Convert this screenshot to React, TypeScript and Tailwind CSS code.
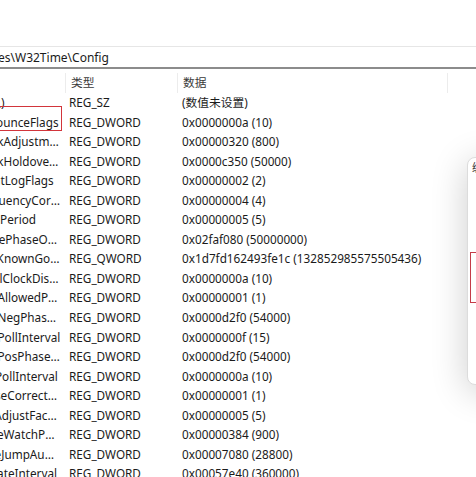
const rows: [string, string, string][] = [
  ["(默认)", "REG_SZ", "(数值未设置)"],
  ["AnnounceFlags", "REG_DWORD", "0x0000000a (10)"],
  ["ClockAdjustmentAuditLimit", "REG_DWORD", "0x00000320 (800)"],
  ["ClockHoldoverPeriod", "REG_DWORD", "0x0000c350 (50000)"],
  ["EventLogFlags", "REG_DWORD", "0x00000002 (2)"],
  ["FrequencyCorrectRate", "REG_DWORD", "0x00000004 (4)"],
  ["HoldPeriod", "REG_DWORD", "0x00000005 (5)"],
  ["LargePhaseOffset", "REG_DWORD", "0x02faf080 (50000000)"],
  ["LastKnownGoodTime", "REG_QWORD", "0x1d7fd162493fe1c (132852985575505436)"],
  ["LocalClockDispersion", "REG_DWORD", "0x0000000a (10)"],
  ["MaxAllowedPhaseOffset", "REG_DWORD", "0x00000001 (1)"],
  ["MaxNegPhaseCorrection", "REG_DWORD", "0x0000d2f0 (54000)"],
  ["MaxPollInterval", "REG_DWORD", "0x0000000f (15)"],
  ["MaxPosPhaseCorrection", "REG_DWORD", "0x0000d2f0 (54000)"],
  ["MinPollInterval", "REG_DWORD", "0x0000000a (10)"],
  ["PhaseCorrectRate", "REG_DWORD", "0x00000001 (1)"],
  ["PollAdjustFactor", "REG_DWORD", "0x00000005 (5)"],
  ["SpikeWatchPeriod", "REG_DWORD", "0x00000384 (900)"],
  ["TimeJumpAuditOffset", "REG_DWORD", "0x00007080 (28800)"],
  ["UpdateInterval", "REG_DWORD", "0x00057e40 (360000)"],
];

export default function App() {
  return (
    <div
      className="relative w-[476px] h-[477px] overflow-hidden bg-white text-[#1b1b1b]"
      style={{ fontFamily: '"Noto Sans", "Noto Sans CJK SC", sans-serif' }}
    >
      <div className="h-[46px] bg-white" />

      {/* address bar */}
      <div className="h-[23px] border-t border-[#e6e6e6] border-b-2 border-b-[#8c8c8c] flex items-center text-[12px] leading-none">
        <span className="-ml-[2px] pt-[1px]">es\W32Time\Config</span>
      </div>

      {/* list */}
      <div className="relative">
        <div className="flex h-[24px] items-center text-[11.75px] text-[#3a3a3a]">
          <div className="w-[65px] h-full" />
          <div className="w-[112px] h-[20px] mt-[3px] flex items-center pl-[5px] border-l border-[#ececec]">类型</div>
          <div className="w-[270px] h-[20px] mt-[3px] flex items-center pl-[5px] border-l border-[#ececec]">数据</div>
          <div className="h-[20px] mt-[3px] border-l border-[#ececec]" />
        </div>

        {rows.map(([name, type, data]) => (
          <div key={name} className="flex h-[19.55px] items-center text-[11.75px] whitespace-nowrap">
            <div className="w-[90px] -ml-[26px] pr-[3px] overflow-hidden text-ellipsis">{name}</div>
            <div className="w-[112px] pl-[5px]">{type}</div>
            <div className="pl-[6px]">{data}</div>
          </div>
        ))}

        <div className="absolute -left-[4px] top-[37px] w-[66px] h-[25px] border-[1.5px] border-[#d2353b]" />
      </div>

      {/* dialog peeking from the right */}
      <div className="absolute left-[467px] top-[157px] w-[220px] h-[228px] rounded-lg border border-[#dcdcdc] bg-white shadow-[0_6px_36px_rgba(0,0,0,0.2)]">
        <div className="pl-[4px] pt-[2px] text-[11px] text-[#333]">编辑 DWORD (32 位)值</div>
        <div className="absolute left-[2px] top-[94px] w-[80px] h-[51px] border-[1.5px] border-[#c43b48]" />
      </div>
    </div>
  );
}
